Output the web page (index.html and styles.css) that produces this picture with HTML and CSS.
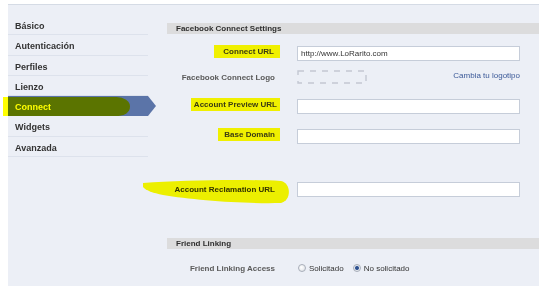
FILE: index.html
```html
<!DOCTYPE html>
<html>
<head>
  <title>Connect Settings</title>
  <link rel="stylesheet" href="styles.css">
</head>
<body>
  <div class="page">
    <ul class="tabs">
      <li>Básico</li>
      <li>Autenticación</li>
      <li>Perfiles</li>
      <li>Lienzo</li>
      <li class="active">Connect<span class="marker"></span></li>
      <li>Widgets</li>
      <li>Avanzada</li>
    </ul>

    <div class="settings">
      <h3 class="bar">Facebook Connect Settings</h3>

      <div class="row row-first">
        <label class="lbl"><span class="hl hl-wide">Connect URL</span></label>
        <input class="field" type="text" value="http://www.LoRarito.com" />
      </div>

      <div class="row row-logo">
        <label class="lbl muted">Facebook Connect Logo</label>
        <svg class="logo-box" width="70" height="14" viewBox="0 0 70 14">
          <rect x="1" y="1" width="68" height="12" fill="none" stroke="#c3c8d2" stroke-width="1.4" stroke-dasharray="6 6"/>
        </svg>
        <a class="change" href="#">Cambia tu logotipo</a>
      </div>

      <div class="row">
        <label class="lbl"><span class="hl">Account Preview URL</span></label>
        <input class="field" type="text" />
      </div>

      <div class="row">
        <label class="lbl"><span class="hl hl-base">Base Domain</span></label>
        <input class="field" type="text" />
      </div>

      <div class="row row-far">
        <label class="lbl">Account Reclamation URL
          <svg class="brush" width="148" height="26" viewBox="0 0 148 26">
            <path d="M0,5 C40,2 100,1 138,3 C148,5 149,22 138,25 C100,26 50,22 20,17 C10,15 2,12 0,9 Z" fill="#ffff00"/>
          </svg>
        </label>
        <input class="field" type="text" />
      </div>

      <h3 class="bar bar-second">Friend Linking</h3>

      <div class="row row-access">
        <label class="lbl muted">Friend Linking Access</label>
        <div class="options">
          <span class="opt"><span class="radio"></span>Solicitado</span>
          <span class="opt"><span class="radio checked"></span>No solicitado</span>
        </div>
      </div>
    </div>
  </div>
</body>
</html>
```

FILE: styles.css
```css
body {
  margin: 0;
  background: #fff;
  font-family: "Liberation Sans", Arial, sans-serif;
  font-size: 8px;
  color: #333;
}

.page {
  display: flex;
  height: 281px;
  margin: 4px 0 0 8px;
  border-top: 1px solid #d5dbe5;
  background: #eceff6;
}

/* Left tabs */
.tabs {
  list-style: none;
  width: 140px;
  margin: 0;
  padding: 10px 0 0;
  flex: none;
}

.tabs li {
  position: relative;
  height: 15.3px;
  line-height: 15.3px;
  padding: 4px 0 0 7px;
  border-bottom: 1px solid #dde2ec;
  font-size: 9px;
  font-weight: bold;
  color: #333;
}

.tabs li.active {
  background: #5b74a8;
  border-bottom-color: #5b74a8;
  color: #fff;
}

.tabs li.active::after {
  content: "";
  position: absolute;
  top: 0;
  right: -8px;
  border-left: 8px solid #5b74a8;
  border-top: 10px solid transparent;
  border-bottom: 10px solid transparent;
}

.marker {
  position: absolute;
  top: 1px;
  left: -5px;
  width: 127px;
  height: 19px;
  background: #ffff00;
  mix-blend-mode: multiply;
  border-radius: 0 14px 12px 0 / 0 10px 10px 0;
}

/* Settings column */
.settings {
  flex: 1;
  margin-left: 19px;
  padding-top: 18px;
}

.bar {
  margin: 0;
  height: 11px;
  line-height: 11px;
  padding-left: 9px;
  background: #dcdcdd;
  font-size: 8px;
  font-weight: bold;
  color: #2e2e2e;
}

.bar-second {
  margin-top: 41px;
}

.row {
  display: flex;
  align-items: center;
  width: 353px;
  margin-top: 15px;
}

.row-first {
  margin-top: 12px;
}

.row-logo {
  margin-top: 9px;
}

.row-far {
  margin-top: 38px;
}

.row-access {
  margin-top: 12px;
  height: 14px;
}

.lbl {
  position: relative;
  flex: none;
  box-sizing: border-box;
  width: 113px;
  padding-right: 5px;
  text-align: right;
  font-weight: bold;
  color: #333;
}

.lbl.muted {
  color: #5a5a5a;
}

.hl {
  position: relative;
  top: -2px;
  display: inline-block;
  margin-right: -5px;
  padding: 2px 3px 2px 3px;
  line-height: 9px;
  background: #f0f000;
  color: #3a3a12;
}

.hl-wide {
  padding: 2px 6px 2px 9px;
}

.hl-base {
  padding: 2px 5px 2px 6px;
}

.brush {
  position: absolute;
  top: -7px;
  left: -24px;
  mix-blend-mode: multiply;
}

.field {
  flex: none;
  box-sizing: border-box;
  width: 223px;
  height: 15px;
  margin: 0 0 0 17px;
  padding: 0 3px;
  border: 1px solid #c6cdd9;
  background: #fff;
  font-family: "Liberation Sans", Arial, sans-serif;
  font-size: 8px;
  color: #333;
}

.logo-box {
  margin-left: 17px;
}

.change {
  margin-left: auto;
  color: #3b5998;
  text-decoration: none;
  position: relative;
  top: -2px;
}

.options {
  display: flex;
  margin-left: 18px;
  gap: 9px;
}

.opt {
  display: flex;
  align-items: center;
  color: #333;
}

.radio {
  box-sizing: border-box;
  width: 8px;
  height: 8px;
  margin-right: 3px;
  border: 1px solid #a8aeb9;
  border-radius: 50%;
  background: radial-gradient(circle at 40% 40%, #fff, #d9dce2);
}

.radio.checked {
  background: radial-gradient(circle, #27467f 0, #3d5f9c 1.6px, #e8ebf0 2.4px, #d3d7de 100%);
}
```
